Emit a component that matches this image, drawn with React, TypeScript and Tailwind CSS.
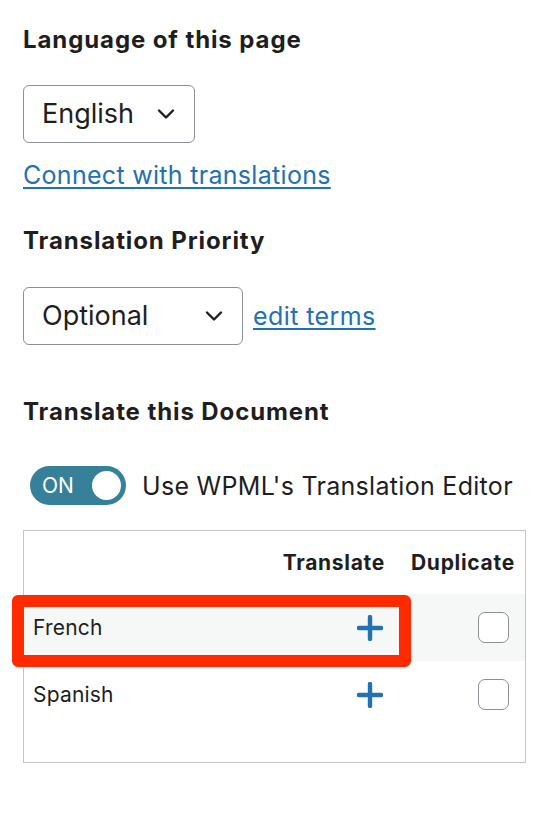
import { useState } from "react";

function Chevron() {
  return (
    <svg width="18" height="12" viewBox="0 0 18 12" fill="none" className="text-[#1e1e1e]">
      <path d="M2 2.5l7 7 7-7" stroke="currentColor" strokeWidth="2.4" strokeLinecap="round" strokeLinejoin="round" />
    </svg>
  );
}

function Plus() {
  return (
    <svg width="26" height="26" viewBox="0 0 26 26" className="text-[#2271b1]">
      <path d="M13 2v22M2 13h22" stroke="currentColor" strokeWidth="4.4" strokeLinecap="round" />
    </svg>
  );
}

function FakeSelect({ value, width }: { value: string; width: string }) {
  return (
    <div
      className={`${width} h-[58px] flex items-center justify-between pl-[18px] pr-[19px] border-[1.5px] border-[#8c8f94] rounded-[6px] bg-white text-[27px] text-[#1e1e1e]`}
    >
      <span className="pt-[1px]">{value}</span>
      <Chevron />
    </div>
  );
}

function Checkbox() {
  return <div className="w-[31px] h-[31px] rounded-[7px] border-[1.5px] border-[#8c8f94] bg-white" />;
}

const rows = [
  { name: "French", shaded: true },
  { name: "Spanish", shaded: false },
];

export default function App() {
  const [on] = useState(true);

  return (
    <div
      className="w-[552px] min-h-[822px] bg-white pl-[23px] pt-[26px] text-[#1e1e1e]"
      style={{ fontFamily: "Inter, 'Liberation Sans', sans-serif" }}
    >
      {/* Language */}
      <h2 className="text-[24px] leading-[28px] font-bold tracking-[0.9px]">Language of this page</h2>
      <div className="mt-[31px]">
        <FakeSelect value="English" width="w-[172px]" />
      </div>
      <a href="#" className="block mt-[17px] text-[25px] leading-[30px] tracking-[0.3px] text-[#2271b1] underline underline-offset-[3px] w-fit">
        Connect with translations
      </a>

      {/* Priority */}
      <h2 className="mt-[37px] text-[24px] leading-[28px] font-bold tracking-[0.9px]">Translation Priority</h2>
      <div className="mt-[32px] flex items-center gap-[10px]">
        <FakeSelect value="Optional" width="w-[220px]" />
        <a href="#" className="text-[25px] leading-[30px] tracking-[0.4px] text-[#2271b1] underline underline-offset-[3px]">
          edit terms
        </a>
      </div>

      {/* Translate */}
      <h2 className="mt-[53px] text-[24px] leading-[28px] font-bold tracking-[0.9px]">Translate this Document</h2>
      <div className="mt-[40px] ml-[7px] flex items-center gap-[16px]">
        <div className="w-[96px] h-[39px] rounded-full bg-[#37809a] flex items-center justify-between pl-[12px] pr-[5px]">
          <span className="text-white text-[21px]">{on ? "ON" : "OFF"}</span>
          <span className="w-[29px] h-[29px] rounded-full bg-white" />
        </div>
        <span className="text-[25px] leading-[30px] tracking-[0.3px]">Use WPML's Translation Editor</span>
      </div>

      {/* Table */}
      <div className="relative mt-[25px] w-[503px] h-[233px] border-[1.5px] border-[#c3c4c7] bg-white">
        <div className="flex items-center h-[63px] text-[21px] font-bold tracking-[0.7px]">
          <div className="flex-1" />
          <div className="w-[130px] text-right pr-[16px]">Translate</div>
          <div className="w-[124px] pl-[10px]">Duplicate</div>
        </div>
        {rows.map((r) => (
          <div
            key={r.name}
            className={`flex items-center h-[67px] text-[21px] tracking-[0.2px] ${r.shaded ? "bg-[#f6f7f7]" : ""}`}
          >
            <div className="flex-1 pl-[9px]">{r.name}</div>
            <div className="w-[130px] flex justify-end pr-[18px]">
              <Plus />
            </div>
            <div className="w-[124px] flex justify-end pr-[16px]">
              <Checkbox />
            </div>
          </div>
        ))}

        {/* highlight annotation */}
        <div className="absolute left-[-12px] top-[64px] w-[399px] h-[72px] border-[12px] border-[#ff2a00] rounded-[6px] pointer-events-none" />
      </div>
    </div>
  );
}
